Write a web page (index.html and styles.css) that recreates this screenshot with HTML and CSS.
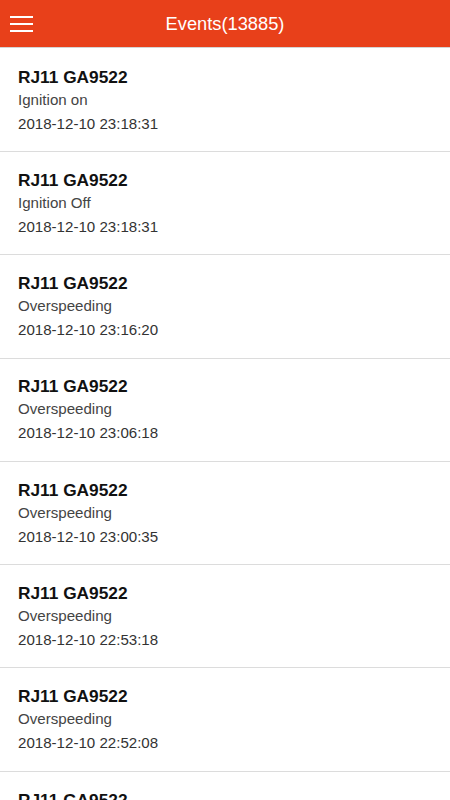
FILE: index.html
```html
<!DOCTYPE HTML>
<html>
<head>
<meta charset="utf-8">
<title>Events</title>
<link rel="stylesheet" href="styles.css">
</head>
<body>
	<div class="topbar">
		<div class="menu">
			<span></span>
			<span></span>
			<span></span>
		</div>
		<div class="title">Events(13885)</div>
		<div></div>
	</div>
	<ul class="events">
		<li>
			<div class="car">RJ11 GA9522</div>
			<div class="kind">Ignition on</div>
			<div class="time">2018-12-10 23:18:31</div>
		</li>
		<li>
			<div class="car">RJ11 GA9522</div>
			<div class="kind">Ignition Off</div>
			<div class="time">2018-12-10 23:18:31</div>
		</li>
		<li>
			<div class="car">RJ11 GA9522</div>
			<div class="kind">Overspeeding</div>
			<div class="time">2018-12-10 23:16:20</div>
		</li>
		<li>
			<div class="car">RJ11 GA9522</div>
			<div class="kind">Overspeeding</div>
			<div class="time">2018-12-10 23:06:18</div>
		</li>
		<li>
			<div class="car">RJ11 GA9522</div>
			<div class="kind">Overspeeding</div>
			<div class="time">2018-12-10 23:00:35</div>
		</li>
		<li>
			<div class="car">RJ11 GA9522</div>
			<div class="kind">Overspeeding</div>
			<div class="time">2018-12-10 22:53:18</div>
		</li>
		<li>
			<div class="car">RJ11 GA9522</div>
			<div class="kind">Overspeeding</div>
			<div class="time">2018-12-10 22:52:08</div>
		</li>
		<li>
			<div class="car">RJ11 GA9522</div>
			<div class="kind">Overspeeding</div>
			<div class="time">2018-12-10 22:50:41</div>
		</li>
	</ul>
</body>
</html>
```

FILE: styles.css
```css
*{
	margin: 0;
	padding: 0;
	list-style: none;
	box-sizing: border-box;
}

body{
	font-family: "Liberation Sans", Arial, sans-serif;
	background-color: #fff;
	overflow: hidden;
}

.topbar{
	height: 47.67px;
	background-color: #e8401a;
	border-bottom: 1px solid #d4d4d4;
	display: grid;
	grid-template-columns: 1fr auto 1fr;
	align-items: center;
}
.menu{
	display: flex;
	flex-direction: column;
	gap: 4.5px;
	width: 23px;
	margin-left: 10px;
	margin-top: 1px;
}
.menu span{
	display: block;
	height: 2.5px;
	background-color: #fff;
}
.title{
	color: #fff;
	font-size: 18.3px;
	padding-top: 2px;
}

.events{
	padding-top: 1px;
}
.events li{
	padding: 16.9px 18px 14.4px;
	border-bottom: 1px solid #dcdcdc;
}
.car{
	font-size: 17.3px;
	font-weight: bold;
	line-height: 22px;
	color: #111;
}
.kind{
	font-size: 15.1px;
	line-height: 23px;
	color: #444;
}
.time{
	font-size: 15.1px;
	line-height: 26px;
	color: #333;
}
```
